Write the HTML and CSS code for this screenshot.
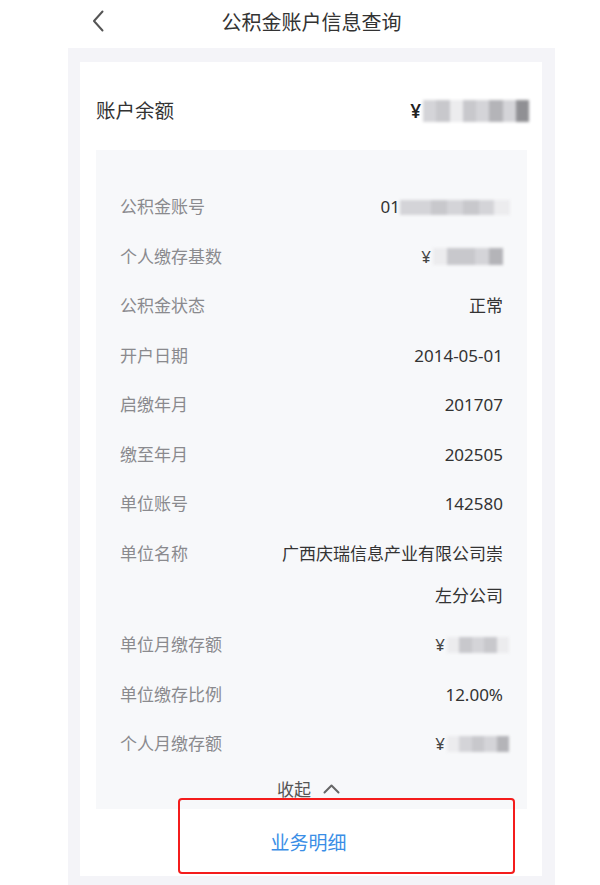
FILE: index.html
```html
<!DOCTYPE html>
<html lang="zh-CN">
<head>
<meta charset="utf-8">
<title>公积金账户信息查询</title>
<link rel="stylesheet" href="styles.css">
</head>
<body>
<div class="app">
  <header class="header">
    <span class="back">
      <svg width="12" height="22" viewBox="0 0 12 22"><polyline points="10.5,1.5 2,11 10.5,20.5" fill="none" stroke="#555" stroke-width="2" stroke-linecap="round" stroke-linejoin="round"/></svg>
    </span>
    <h1 class="title">公积金账户信息查询</h1>
    <span class="spacer"></span>
  </header>
  <main class="panel">
    <section class="card">
      <div class="balance">
        <span class="balance-label">账户余额</span>
        <span class="balance-value"><span class="yen">¥</span><span class="mask mask-balance"><i class="m1"></i><i class="m2"></i><i class="m0"></i><i class="m2"></i><i class="m1"></i><i class="m3"></i><i class="m1"></i><i class="m4"></i></span></span>
      </div>
      <div class="details">
        <div class="row"><span class="label">公积金账号</span><span class="value">01<span class="mask mask-acct"><i class="m1"></i><i class="m1"></i><i class="m2"></i><i class="m1"></i><i class="m2"></i><i class="m1"></i><i class="m0"></i></span></span></div>
        <div class="row"><span class="label">个人缴存基数</span><span class="value"><span class="yen-s">¥</span><span class="mask mask-base"><i class="m0"></i><i class="m2"></i><i class="m2"></i><i class="m1"></i><i class="m3"></i></span></span></div>
        <div class="row"><span class="label">公积金状态</span><span class="value">正常</span></div>
        <div class="row"><span class="label">开户日期</span><span class="value">2014-05-01</span></div>
        <div class="row"><span class="label">启缴年月</span><span class="value">201707</span></div>
        <div class="row"><span class="label">缴至年月</span><span class="value">202505</span></div>
        <div class="row"><span class="label">单位账号</span><span class="value">142580</span></div>
        <div class="row"><span class="label">单位名称</span><span class="value wrap">广西庆瑞信息产业有限公司崇左分公司</span></div>
        <div class="row"><span class="label">单位月缴存额</span><span class="value"><span class="yen-s">¥</span><span class="mask mask-unit"><i class="m0"></i><i class="m2"></i><i class="m1"></i><i class="m2"></i><i class="m0"></i></span></span></div>
        <div class="row"><span class="label">单位缴存比例</span><span class="value">12.00%</span></div>
        <div class="row last"><span class="label">个人月缴存额</span><span class="value"><span class="yen-s">¥</span><span class="mask mask-unit"><i class="m0"></i><i class="m1"></i><i class="m2"></i><i class="m1"></i><i class="m3"></i></span></span></div>
        <div class="collapse">
          <span>收起</span>
          <svg width="17" height="10" viewBox="0 0 17 10"><polyline points="1.5,8.5 8.5,1.5 15.5,8.5" fill="none" stroke="#666" stroke-width="2" stroke-linecap="round" stroke-linejoin="round"/></svg>
        </div>
      </div>
      <div class="action">
        <span class="action-text">业务明细</span>
        <span class="highlight"></span>
      </div>
    </section>
  </main>
</div>
</body>
</html>
```

FILE: styles.css
```css
* { box-sizing: border-box; }
html, body { margin: 0; padding: 0; background: #fff; }
body {
  font-family: "Noto Sans", "Noto Sans CJK SC", sans-serif;
  color: #333;
  height: 885px;
  overflow: hidden;
}
.app {
  width: 487px;
  margin-left: 68px;
}
.header {
  height: 48px;
  display: grid;
  grid-template-columns: 1fr auto 1fr;
  align-items: center;
  padding: 0 24px;
}
.back { display: flex; align-items: center; height: 22px; margin-top: -6px; }
.title {
  margin: 0 0 6px;
  font-size: 20px;
  font-weight: 400;
  color: #333;
}
.panel {
  background: #f4f4f8;
  padding: 14px 13px 12px 12px;
}
.card {
  background: #fff;
  padding: 0 15px 0 16px;
}
.balance {
  display: flex;
  justify-content: space-between;
  align-items: center;
  padding: 30px 0 20px;
  height: 88px;
  font-size: 19.5px;
  line-height: 38px;
}
.balance-label { color: #333; }
.balance-value { display: flex; align-items: center; margin-right: -2px; }
.yen { font-size: 19px; color: #222; font-weight: 600; margin-right: 2px; }
.yen-s { color: #444; margin-right: 2px; }
.mask {
  display: inline-flex;
  filter: blur(1.4px);
}
.mask i { display: block; height: 100%; flex: 1; }
.mask .m0 { background: #ececee; }
.mask .m1 { background: #d4d4d8; }
.mask .m2 { background: #c8c8cc; }
.mask .m3 { background: #b4b4b8; }
.mask .m4 { background: #909094; }
.mask-balance { width: 106px; height: 22px; }
.mask-acct { width: 110px; height: 15px; margin-right: -7px; }
.mask-base { width: 70px; height: 17px; }
.mask-unit { width: 62px; height: 16px; margin-right: -6px; }

.details {
  background: #f7f8fa;
  padding: 36px 24px 0;
}
.row {
  display: flex;
  justify-content: space-between;
  align-items: flex-start;
  font-size: 17px;
  line-height: 42px;
  margin-bottom: 7.5px;
}
.row.last { margin-bottom: 3.5px; }
.label { color: #8a8a8e; flex: 0 0 auto; }
.value {
  color: #333;
  text-align: right;
  display: flex;
  align-items: center;
  height: 42px;
}
.value.wrap {
  display: block;
  height: auto;
  max-width: 228px;
}
.collapse {
  height: 40px;
  display: flex;
  align-items: center;
  justify-content: center;
  gap: 12px;
  font-size: 17px;
  color: #555;
  padding-right: 6px;
}
.action {
  position: relative;
  height: 67px;
  display: flex;
  align-items: center;
  justify-content: center;
}
.action-text {
  font-size: 19px;
  color: #3a8ee6;
  margin-right: 6px;
}
.highlight {
  position: absolute;
  left: 82px;
  top: -11px;
  width: 337px;
  height: 76px;
  border: 2px solid #f41c1c;
  border-radius: 4px;
}
```
